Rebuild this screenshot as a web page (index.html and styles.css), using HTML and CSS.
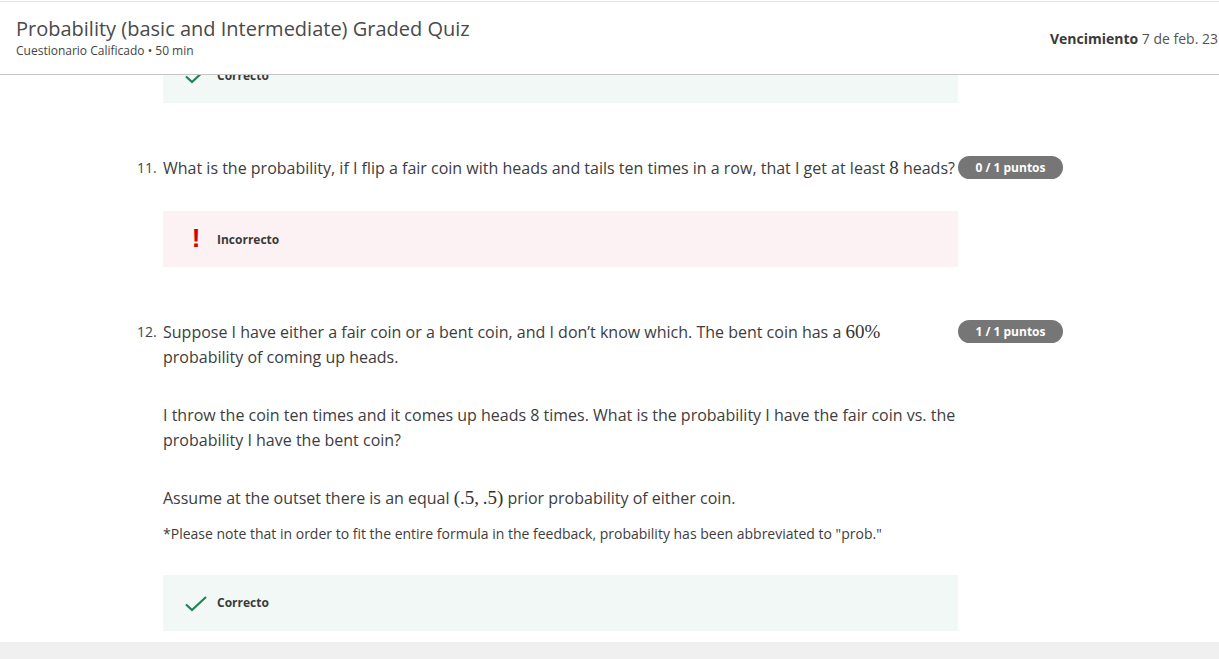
FILE: index.html
```html
<!DOCTYPE html>
<html lang="es">
<head>
<meta charset="utf-8">
<title>Probability Graded Quiz</title>
<link rel="stylesheet" href="styles.css">
</head>
<body>
<header class="topbar">
  <div class="title-block">
    <h1 class="title">Probability (basic and Intermediate) Graded Quiz</h1>
    <div class="subtitle">Cuestionario Calificado • 50 min</div>
  </div>
  <div class="due"><strong>Vencimiento</strong> 7 de feb. 23</div>
</header>

<main class="content">
  <div class="feedback correct first">
    <svg class="icon" width="22" height="16" viewBox="0 0 22 16"><path d="M1 8.5 L7 14 L21 1" fill="none" stroke="#1f8354" stroke-width="2.2"/></svg>
    <span class="fb-label">Correcto</span>
  </div>

  <section class="question q11">
    <div class="num">11.</div>
    <div class="body">
      <p class="line">What is the probability, if I flip a fair coin with heads and tails ten times in a row, that I get at least <span class="math">8</span> heads?</p>
    </div>
    <div class="badge">0 / 1 puntos</div>
  </section>

  <div class="feedback incorrect">
    <span class="icon excl">!</span>
    <span class="fb-label">Incorrecto</span>
  </div>

  <section class="question q12">
    <div class="num">12.</div>
    <div class="body">
      <p class="line">Suppose I have either a fair coin or a bent coin, and I don’t know which. The bent coin has a <span class="math">60%</span> probability of coming up heads.</p>
      <p class="line para">I throw the coin ten times and it comes up heads 8 times. What is the probability I have the fair coin vs. the probability I have the bent coin?</p>
      <p class="line para">Assume at the outset there is an equal <span class="math">(.5,&#8201;.5)</span> prior probability of either coin.</p>
      <p class="note">*Please note that in order to fit the entire formula in the feedback, probability has been abbreviated to "prob."</p>
    </div>
    <div class="badge">1 / 1 puntos</div>
  </section>

  <div class="feedback correct last">
    <svg class="icon" width="22" height="16" viewBox="0 0 22 16"><path d="M1 8.5 L7 14 L21 1" fill="none" stroke="#1f8354" stroke-width="2.2"/></svg>
    <span class="fb-label">Correcto</span>
  </div>
</main>

<footer class="footer"></footer>
</body>
</html>
```
FILE: styles.css
```css
html, body {
  margin: 0;
  padding: 0;
  background: #ffffff;
}
body {
  font-family: "Open Sans", "Noto Sans", sans-serif;
  color: #333333;
  width: 1219px;
  height: 659px;
  overflow: hidden;
  position: relative;
}
.topbar {
  position: absolute;
  top: 1px;
  left: 0;
  right: 0;
  height: 72px;
  background: #ffffff;
  border-top: 1px solid #e1e1e1;
  border-bottom: 1px solid #c6c6c6;
  display: flex;
  justify-content: space-between;
  align-items: center;
  padding: 0 1px 0 16px;
  z-index: 2;
}
.title-block {
  display: flex;
  flex-direction: column;
  margin-top: -1px;
}
.title {
  margin: 0;
  font-size: 20px;
  font-weight: 400;
  line-height: 26px;
  color: #4a4a4a;
}
.subtitle {
  font-size: 12px;
  line-height: 16px;
  color: #444444;
  margin-top: 1px;
}
.due {
  font-size: 14px;
  color: #555555;
  margin-top: 0;
}
.due strong {
  color: #3a3a3a;
  font-weight: 700;
}
.content {
  padding-top: 47px;
  display: flex;
  flex-direction: column;
}
.feedback {
  margin-left: 163px;
  width: 795px;
  height: 56px;
  box-sizing: border-box;
  display: flex;
  align-items: center;
  padding-left: 22px;
  gap: 10px;
}
.feedback.correct { background: #f2f8f6; }
.feedback.incorrect {
  background: #fdf2f3;
  margin-top: 31px;
}
.feedback.last { margin-top: 31px; }
.icon {
  width: 22px;
  flex: none;
}
.excl {
  color: #d30000;
  font-weight: 700;
  font-size: 26px;
  line-height: 26px;
  text-align: center;
  font-family: "Liberation Sans", sans-serif;
  margin-top: -2px;
}
.feedback.correct .icon { margin-top: 2px; }
.fb-label {
  font-size: 12px;
  font-weight: 700;
  color: #3a3a3a;
}
.question {
  display: grid;
  grid-template-columns: 26px 795px 105px;
  margin-left: 137px;
  align-items: start;
}
.q11 { margin-top: 53px; }
.q12 { margin-top: 53px; }
.num {
  font-size: 14px;
  line-height: 24px;
  color: #444444;
}
.body {
  min-width: 0;
}
.line {
  margin: 0;
  font-size: 16px;
  line-height: 24.5px;
  color: #3d3d3d;
}
.q11 .line { line-height: 24px; }
.para { margin-top: 34px; }
.math {
  font-family: "Liberation Serif", "DejaVu Serif", serif;
  font-size: 19px;
  color: #333333;
}
.note {
  margin: 13px 0 0;
  font-size: 14px;
  line-height: 20px;
  color: #3d3d3d;
}
.badge {
  height: 23px;
  border-radius: 12px;
  background: #767676;
  color: #ffffff;
  font-size: 12px;
  font-weight: 700;
  display: flex;
  align-items: center;
  justify-content: center;
  margin-top: 0;
}
.footer {
  position: absolute;
  left: 0;
  right: 0;
  top: 642px;
  height: 17px;
  background: #f0f0f0;
}
```
